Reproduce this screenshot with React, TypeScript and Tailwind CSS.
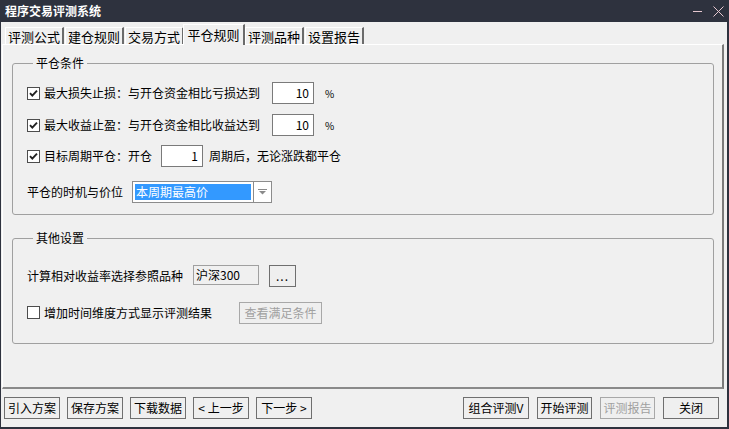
import React from 'react';

const font = { fontFamily: '"Noto Sans CJK SC", "Noto Sans", sans-serif' };

const tabs = ['评测公式', '建仓规则', '交易方式', '平仓规则', '评测品种', '设置报告'];

const CheckBox: React.FC<{ checked?: boolean }> = ({ checked }) => (
  <div className="w-[13px] h-[13px] border border-[#4d4d4d] bg-white flex items-center justify-center shrink-0">
    {checked && (
      <svg width="9" height="9" viewBox="0 0 9 9">
        <path d="M1 4.2 L3.3 6.6 L8 1.6" fill="none" stroke="#222" strokeWidth="1.9" />
      </svg>
    )}
  </div>
);

const NumBox: React.FC<{ value: string; w: string }> = ({ value, w }) => (
  <div className={`${w} h-[22px] border border-[#7a7a7a] bg-white flex items-center justify-end pr-[4px] text-[12px] text-black`}>
    {value}
  </div>
);

const Btn: React.FC<{ label: string; w: string; disabled?: boolean }> = ({ label, w, disabled }) => (
  <div
    className={`${w} h-[22px] border flex items-center justify-center text-[12px] bg-[#efefef] ${
      disabled ? 'border-[#a8a8a8] text-[#a0a0a0]' : 'border-[#6f6f6f] text-black'
    }`}
  >
    {label}
  </div>
);

const Group: React.FC<{ title: string; className?: string; children: React.ReactNode }> = ({ title, className, children }) => (
  <fieldset className={`border border-[#a0a0a0] rounded-[3px] ${className ?? ''}`}>
    <legend className="ml-[6px] px-[3px] text-[12px] leading-[14px] text-black">{title}</legend>
    {children}
  </fieldset>
);

export default function App() {
  return (
    <div className="w-[729px] h-[429px] bg-[#2e323e] flex flex-col overflow-hidden text-black" style={font}>
      {/* title bar */}
      <div className="h-[22px] flex items-center justify-between pl-[5px] pr-[5px] shrink-0">
        <span className="text-white text-[12px] font-bold leading-none">程序交易评测系统</span>
        <div className="flex items-center gap-[10px]">
          <svg width="11" height="11" viewBox="0 0 11 11">
            <path d="M1 5.5 H10" stroke="#e6c8d0" strokeWidth="1" />
          </svg>
          <svg width="11" height="11" viewBox="0 0 11 11">
            <path d="M0.5 0.5 L10.5 10.5 M10.5 0.5 L0.5 10.5" stroke="#e6c8d0" strokeWidth="1" />
          </svg>
        </div>
      </div>

      {/* body */}
      <div className="flex-1 ml-[1px] mr-[2px] mb-[2px] bg-[#f0f0f0] flex flex-col">
        {/* tabs */}
        <div className="h-[22px] flex items-end pl-[3px] shrink-0">
          {tabs.map((t) => {
            const active = t === '平仓规则';
            return (
              <div
                key={t}
                className={`flex items-center justify-center border-l border-t border-white border-r-2 border-r-[#6b6b6b] text-[13px] leading-none ${
                  active
                    ? 'h-[21px] w-[62px] -mx-[1px] relative z-10 bg-[#f0f0f0] -mb-[1px] pb-[2px]'
                    : 'h-[17px] w-[59px] ml-[1px] pt-[1px]'
                }`}
              >
                {t}
              </div>
            );
          })}
        </div>

        {/* panel */}
        <div className="h-[345px] ml-[1px] mr-[3px] border-l border-t border-white border-r-2 border-b-2 border-r-[#7a7a7a] border-b-[#8a8a8a] pl-[9px] pr-[8px] pt-[11px] flex flex-col shrink-0">
          <Group title="平仓条件" className="pl-[14px] pt-[12px] pb-[11px]">
            <div className="flex items-center h-[22px] text-[12px]">
              <CheckBox checked />
              <span className="ml-[4px] w-[228px]">最大损失止损：与开仓资金相比亏损达到</span>
              <NumBox value="10" w="w-[42px]" />
              <span className="ml-[11px] text-[10px]">%</span>
            </div>
            <div className="flex items-center h-[22px] mt-[10px] text-[12px]">
              <CheckBox checked />
              <span className="ml-[4px] w-[228px]">最大收益止盈：与开仓资金相比收益达到</span>
              <NumBox value="10" w="w-[42px]" />
              <span className="ml-[11px] text-[10px]">%</span>
            </div>
            <div className="flex items-center h-[22px] mt-[9px] text-[12px]">
              <CheckBox checked />
              <span className="ml-[4px] w-[117px]">目标周期平仓：开仓</span>
              <NumBox value="1" w="w-[42px]" />
              <span className="ml-[6px]">周期后，无论涨跌都平仓</span>
            </div>
            <div className="flex items-center h-[22px] mt-[14px] text-[12px]">
              <span className="w-[105px]">平仓的时机与价位</span>
              <div className="w-[140px] h-[22px] border border-[#8c8c8c] bg-white flex">
                <div className="flex-1 m-[2px] bg-[#3399ff] text-white flex items-center pl-[1px] leading-none">本周期最高价</div>
                <div className="w-[18px] border-l border-[#8c8c8c] flex items-center justify-center">
                  <svg width="9" height="6" viewBox="0 0 9 6">
                    <path d="M0 0.5 H9" stroke="#8a8a8a" strokeWidth="1" />
                    <path d="M1 2 H8 L4.5 5.5 Z" fill="#8a8a8a" />
                  </svg>
                </div>
              </div>
            </div>
          </Group>

          <Group title="其他设置" className="mt-[16px] pl-[14px] pt-[20px] pb-[20px]">
            <div className="flex items-center h-[22px] text-[12px]">
              <span className="w-[166px]">计算相对收益率选择参照品种</span>
              <div className="w-[66px] h-[20px] border border-[#a0a0a0] bg-[#f0f0f0] flex items-center pl-[2px] self-start">
                沪深300
              </div>
              <div className="ml-[10px] w-[27px] h-[22px] border border-[#6f6f6f] bg-[#efefef] flex items-center justify-center tracking-[1px]">
                ...
              </div>
            </div>
            <div className="flex items-center h-[21px] mt-[15px] text-[12px]">
              <CheckBox />
              <span className="ml-[4px] w-[195px]">增加时间维度方式显示评测结果</span>
              <Btn label="查看满足条件" w="w-[83px]" disabled />
            </div>
          </Group>
        </div>

        {/* bottom buttons */}
        <div className="flex-1 flex items-center justify-between pl-[3px] pr-[8px]">
          <div className="flex gap-[7px]">
            <Btn label="引入方案" w="w-[56px]" />
            <Btn label="保存方案" w="w-[56px]" />
            <Btn label="下载数据" w="w-[56px]" />
            <Btn label="< 上一步" w="w-[56px]" />
            <Btn label="下一步 >" w="w-[56px]" />
          </div>
          <div className="flex gap-[8px]">
            <Btn label="组合评测V" w="w-[66px]" />
            <Btn label="开始评测" w="w-[55px]" />
            <Btn label="评测报告" w="w-[55px]" disabled />
            <Btn label="关闭" w="w-[56px]" />
          </div>
        </div>
      </div>
    </div>
  );
}
